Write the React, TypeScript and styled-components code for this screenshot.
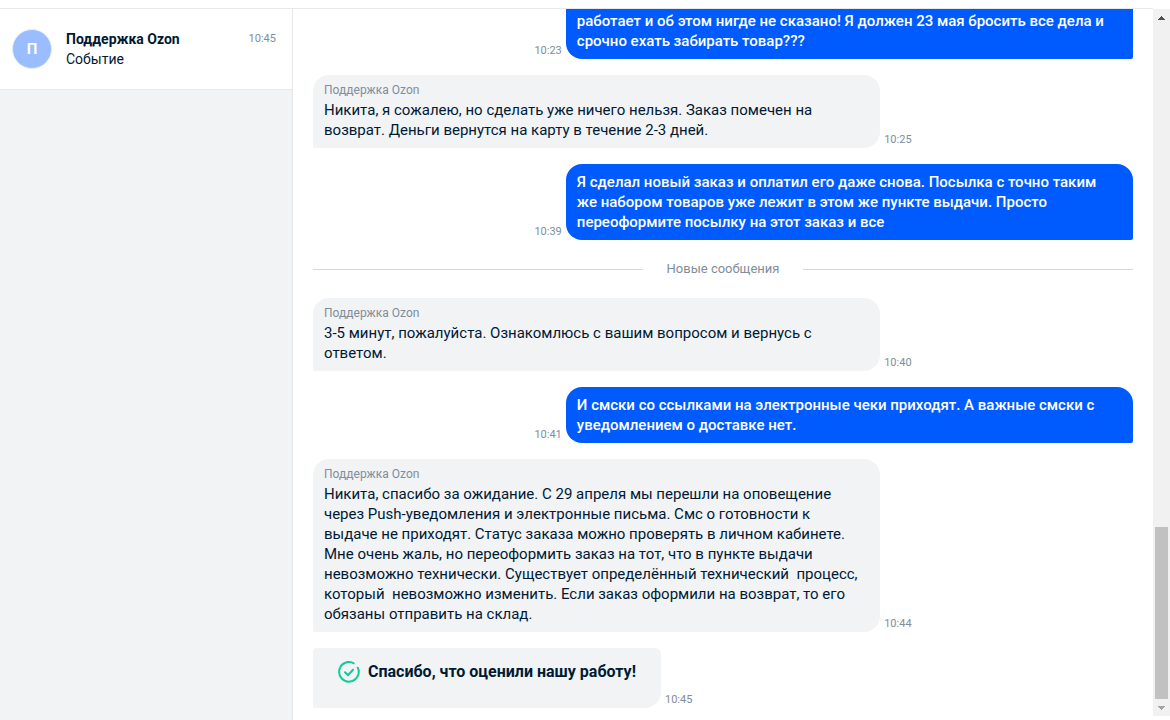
import React from "react";
import styled, { createGlobalStyle } from "styled-components";

const color = {
  ink: "#001a34",
  muted: "#808d9a",
  surface: "#f1f3f5",
  line: "#e6e9ec",
  brand: "#005bff",
  success: "#10cc9a",
};

const GlobalStyle = createGlobalStyle`
  *, *::before, *::after { box-sizing: border-box; }
  body {
    margin: 0;
    background: #fff;
    color: ${color.ink};
    font-family: Roboto, "Liberation Sans", sans-serif;
    font-size: 15px;
    line-height: 20px;
  }
  p, h2 { margin: 0; }
`;

const Page = styled.div`
  display: flex;
  height: 100vh;
  min-height: 480px;
  padding-top: 8px;
  overflow: hidden;
`;

const Sidebar = styled.aside`
  flex: 0 0 293px;
  border-top: 1px solid ${color.line};
  border-right: 1px solid ${color.line};
  background: ${color.surface};
`;

const Dialog = styled.button`
  display: flex;
  align-items: center;
  gap: 14px;
  width: 100%;
  height: 81px;
  padding: 0 16px 0 12px;
  border: 0;
  border-bottom: 1px solid ${color.line};
  background: #fff;
  color: inherit;
  font: inherit;
  font-size: 14px;
  text-align: left;
  cursor: pointer;
`;

const Avatar = styled.span`
  display: flex;
  align-items: center;
  justify-content: center;
  width: 40px;
  height: 40px;
  border: 1px solid #e4edfb;
  border-radius: 50%;
  background: #99bdff;
  color: #fff;
  font-size: 15px;
  font-weight: 700;
`;

const DialogText = styled.span`
  display: flex;
  flex: 1;
  flex-direction: column;
`;

const DialogName = styled.span`
  font-weight: 700;
`;

const Time = styled.time`
  color: ${color.muted};
  font-size: 11px;
  line-height: 16px;
`;

const DialogTime = styled(Time)`
  align-self: flex-start;
  padding-top: 22px;
`;

const Chat = styled.main`
  display: flex;
  flex: 1;
  flex-direction: column;
  gap: 16px;
  min-width: 0;
  padding: 0 20px 12px;
  border-top: 1px solid ${color.line};
  overflow: hidden;
`;

const Row = styled.article<{ $own?: boolean }>`
  display: flex;
  flex: none;
  flex-direction: ${(p) => (p.$own ? "row-reverse" : "row")};
  align-items: flex-end;
  align-self: ${(p) => (p.$own ? "flex-end" : "flex-start")};
  gap: 4px;
`;

const MessageRow = styled(Row)`
  width: 73%;
`;

const Bubble = styled.div<{ $own?: boolean; $continued?: boolean }>`
  flex: 1;
  padding: ${(p) => (p.$continued ? "2px" : p.$own ? "8px" : "7px")} 11px 8px;
  border-radius: ${(p) =>
    p.$continued ? "0 0 2px 16px" : p.$own ? "16px 16px 2px 16px" : "16px 16px 16px 2px"};
  background: ${(p) => (p.$own ? color.brand : color.surface)};
  color: ${(p) => (p.$own ? "#fff" : color.ink)};
  font-weight: ${(p) => (p.$own ? 500 : 400)};
`;

const Author = styled.p`
  margin-bottom: 2px;
  color: ${color.muted};
  font-size: 12px;
  line-height: 16px;
`;

const Text = styled.p`
  white-space: pre-wrap;
`;

const Divider = styled.h2`
  display: flex;
  flex: none;
  align-items: center;
  gap: 24px;
  color: ${color.muted};
  font-size: 13px;
  font-weight: 400;
  line-height: 26px;

  &::before,
  &::after {
    content: "";
    flex: 1;
    height: 1px;
    background: #d6d9dc;
  }
`;

const Thanks = styled.div`
  display: flex;
  align-items: flex-start;
  gap: 8px;
  min-height: 60px;
  padding: 13px 25px 24px;
  border-radius: 4px 6px 16px 2px;
  background: ${color.surface};
  font-weight: 700;
  font-size: 16px;
  line-height: 22px;
`;

const Scrollbar = styled.div`
  display: flex;
  flex: 0 0 17px;
  flex-direction: column;
  align-items: center;
  margin: 1px 0 4px;
  background: #f1f1f1;
`;

const Arrow = styled.button`
  display: flex;
  flex: 0 0 17px;
  align-items: center;
  justify-content: center;
  width: 17px;
  padding: 0;
  border: 0;
  background: none;
`;

const ThumbSpace = styled.div`
  flex: 501;
`;

const Thumb = styled.div`
  flex: 172;
  width: 13px;
  background: #c1c1c1;
`;

type Message = {
  time: string;
  text: string;
  own?: boolean;
  continued?: boolean;
};

const seen: Message[] = [
  {
    own: true,
    continued: true,
    time: "10:23",
    text: "работает и об этом нигде не сказано! Я должен 23 мая бросить все дела и\nсрочно ехать забирать товар???",
  },
  {
    time: "10:25",
    text: "Никита, я сожалею, но сделать уже ничего нельзя. Заказ помечен на\nвозврат. Деньги вернутся на карту в течение 2-3 дней.",
  },
  {
    own: true,
    time: "10:39",
    text: "Я сделал новый заказ и оплатил его даже снова. Посылка с точно таким\nже набором товаров уже лежит в этом же пункте выдачи. Просто\nпереоформите посылку на этот заказ и все",
  },
];

const fresh: Message[] = [
  {
    time: "10:40",
    text: "3-5 минут, пожалуйста. Ознакомлюсь с вашим вопросом и вернусь с\nответом.",
  },
  {
    own: true,
    time: "10:41",
    text: "И смски со ссылками на электронные чеки приходят. А важные смски с\nуведомлением о доставке нет.",
  },
  {
    time: "10:44",
    text: "Никита, спасибо за ожидание. С 29 апреля мы перешли на оповещение\nчерез Push-уведомления и электронные письма. Смс о готовности к\nвыдаче не приходят. Статус заказа можно проверять в личном кабинете.\nМне очень жаль, но переоформить заказ на тот, что в пункте выдачи\nневозможно технически. Существует определённый технический  процесс,\nкоторый  невозможно изменить. Если заказ оформили на возврат, то его\nобязаны отправить на склад.",
  },
];

function ChatMessage({ message }: { message: Message }) {
  return (
    <MessageRow $own={message.own}>
      <Bubble $own={message.own} $continued={message.continued}>
        {!message.own && <Author>Поддержка Ozon</Author>}
        <Text>{message.text}</Text>
      </Bubble>
      <Time>{message.time}</Time>
    </MessageRow>
  );
}

function CheckIcon() {
  return (
    <svg
      width="22"
      height="22"
      viewBox="0 0 22 22"
      fill="none"
      stroke={color.success}
      strokeWidth="2"
      strokeLinecap="round"
      strokeLinejoin="round"
      aria-hidden="true"
    >
      <path d="M15.7 2.3A9.8 9.8 0 1 0 19.8 6.7" />
      <path d="M7 11.2l3 3 5-5.4" />
    </svg>
  );
}

export default function App() {
  return (
    <>
      <GlobalStyle />
      <Page>
        <Sidebar>
          <Dialog type="button">
            <Avatar>П</Avatar>
            <DialogText>
              <DialogName>Поддержка Ozon</DialogName>
              <span>Событие</span>
            </DialogText>
            <DialogTime>10:45</DialogTime>
          </Dialog>
        </Sidebar>
        <Chat>
          {seen.map((m) => (
            <ChatMessage key={m.time} message={m} />
          ))}
          <Divider>Новые сообщения</Divider>
          {fresh.map((m) => (
            <ChatMessage key={m.time} message={m} />
          ))}
          <Row>
            <Thanks>
              <CheckIcon />
              Спасибо, что оценили нашу работу!
            </Thanks>
            <Time>10:45</Time>
          </Row>
        </Chat>
        <Scrollbar>
          <Arrow type="button" aria-label="Прокрутить вверх">
            <svg width="7" height="4" viewBox="0 0 7 4" fill="#505050" shapeRendering="crispEdges">
              <path d="M3 0h1v1h1v1h1v1h1v1H0V3h1V2h1V1h1z" />
            </svg>
          </Arrow>
          <ThumbSpace />
          <Thumb />
          <Arrow type="button" aria-label="Прокрутить вниз">
            <svg width="7" height="4" viewBox="0 0 7 4" fill="#a3a3a3" shapeRendering="crispEdges">
              <path d="M0 0h7v1H6v1H5v1H4v1H3V3H2V2H1V1H0z" />
            </svg>
          </Arrow>
        </Scrollbar>
      </Page>
    </>
  );
}
